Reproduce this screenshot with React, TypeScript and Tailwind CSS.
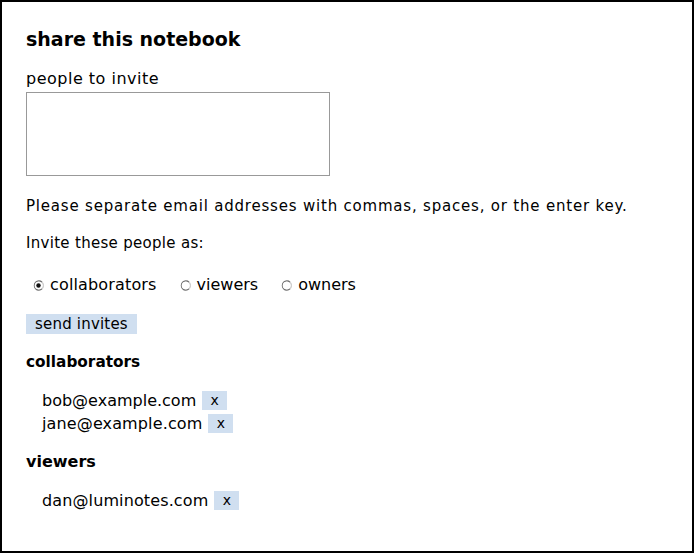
import { useState } from "react";

const font = { fontFamily: '"DejaVu Sans", sans-serif' };

type Role = "collaborators" | "viewers" | "owners";

function Radio({ checked }: { checked: boolean }) {
  return (
    <svg width="11" height="11" viewBox="0 0 11 11" className="mr-[6px]">
      <path d="M9 2.2 A4.5 4.5 0 1 0 9 8.8" fill="none" stroke="#6e6e6e" strokeWidth="1.4" />
      <path d="M9 2.2 A4.5 4.5 0 0 1 9 8.8" fill="none" stroke="#cfcfcf" strokeWidth="1.4" />
      <circle cx="5.5" cy="5.5" r="3.8" fill="#fff" />
      {checked && <circle cx="5.5" cy="5.5" r="2.2" fill="#111" />}
    </svg>
  );
}

function Person({ email, track }: { email: string; track: string }) {
  return (
    <div className="flex h-[23px] items-center">
      <span className={track}>{email}</span>
      <button className="ml-[6px] flex h-[19px] w-[25px] items-center justify-center bg-[#d0dff0] text-[14px]">
        x
      </button>
    </div>
  );
}

export default function App() {
  const [role, setRole] = useState<Role>("collaborators");
  const roles: Role[] = ["collaborators", "viewers", "owners"];

  return (
    <div
      className="h-[553px] w-[694px] border-2 border-black bg-white px-[24px] pt-[26px] text-[15px] text-black"
      style={font}
    >
      <h1 className="text-[19px] font-bold leading-[22px]">share this notebook</h1>

      <div className="mt-[19px] text-[16px] leading-[20px] tracking-[0.5px]">people to invite</div>
      <textarea className="mt-[3px] block h-[84px] w-[304px] resize-none border border-[#999] bg-white" />

      <p className="mt-[21px] leading-[18px] tracking-[0.8px]">
        Please separate email addresses with commas, spaces, or the enter key.
      </p>
      <p className="mt-[19px] leading-[18px] tracking-[0.3px]">Invite these people as:</p>

      <div className="mt-[24px] flex h-[18px] items-center pl-[7px]">
        {roles.map((r) => (
          <label
            key={r}
            onClick={() => setRole(r)}
            className="mr-[23px] flex items-center text-[16px]"
          >
            <Radio checked={role === r} />
            <span className={r === "collaborators" ? "tracking-[0.15px]" : ""}>{r}</span>
          </label>
        ))}
      </div>

      <button className="mt-[20px] block h-[20px] bg-[#d0dff0] px-[9px] text-[15px] leading-[20px] tracking-[0.2px]">
        send invites
      </button>

      <h2 className="mt-[18px] text-[15.3px] font-bold leading-[20px]">collaborators</h2>
      <div className="mt-[17px] pl-[16px] text-[16px]">
        <Person email="bob@example.com" track="" />
        <Person email="jane@example.com" track="tracking-[0.13px]" />
      </div>

      <h2 className="mt-[17px] text-[16px] font-semibold leading-[20px]">viewers</h2>
      <div className="mt-[17px] pl-[16px] text-[16px]">
        <Person email="dan@luminotes.com" track="tracking-[0.12px]" />
      </div>
    </div>
  );
}
